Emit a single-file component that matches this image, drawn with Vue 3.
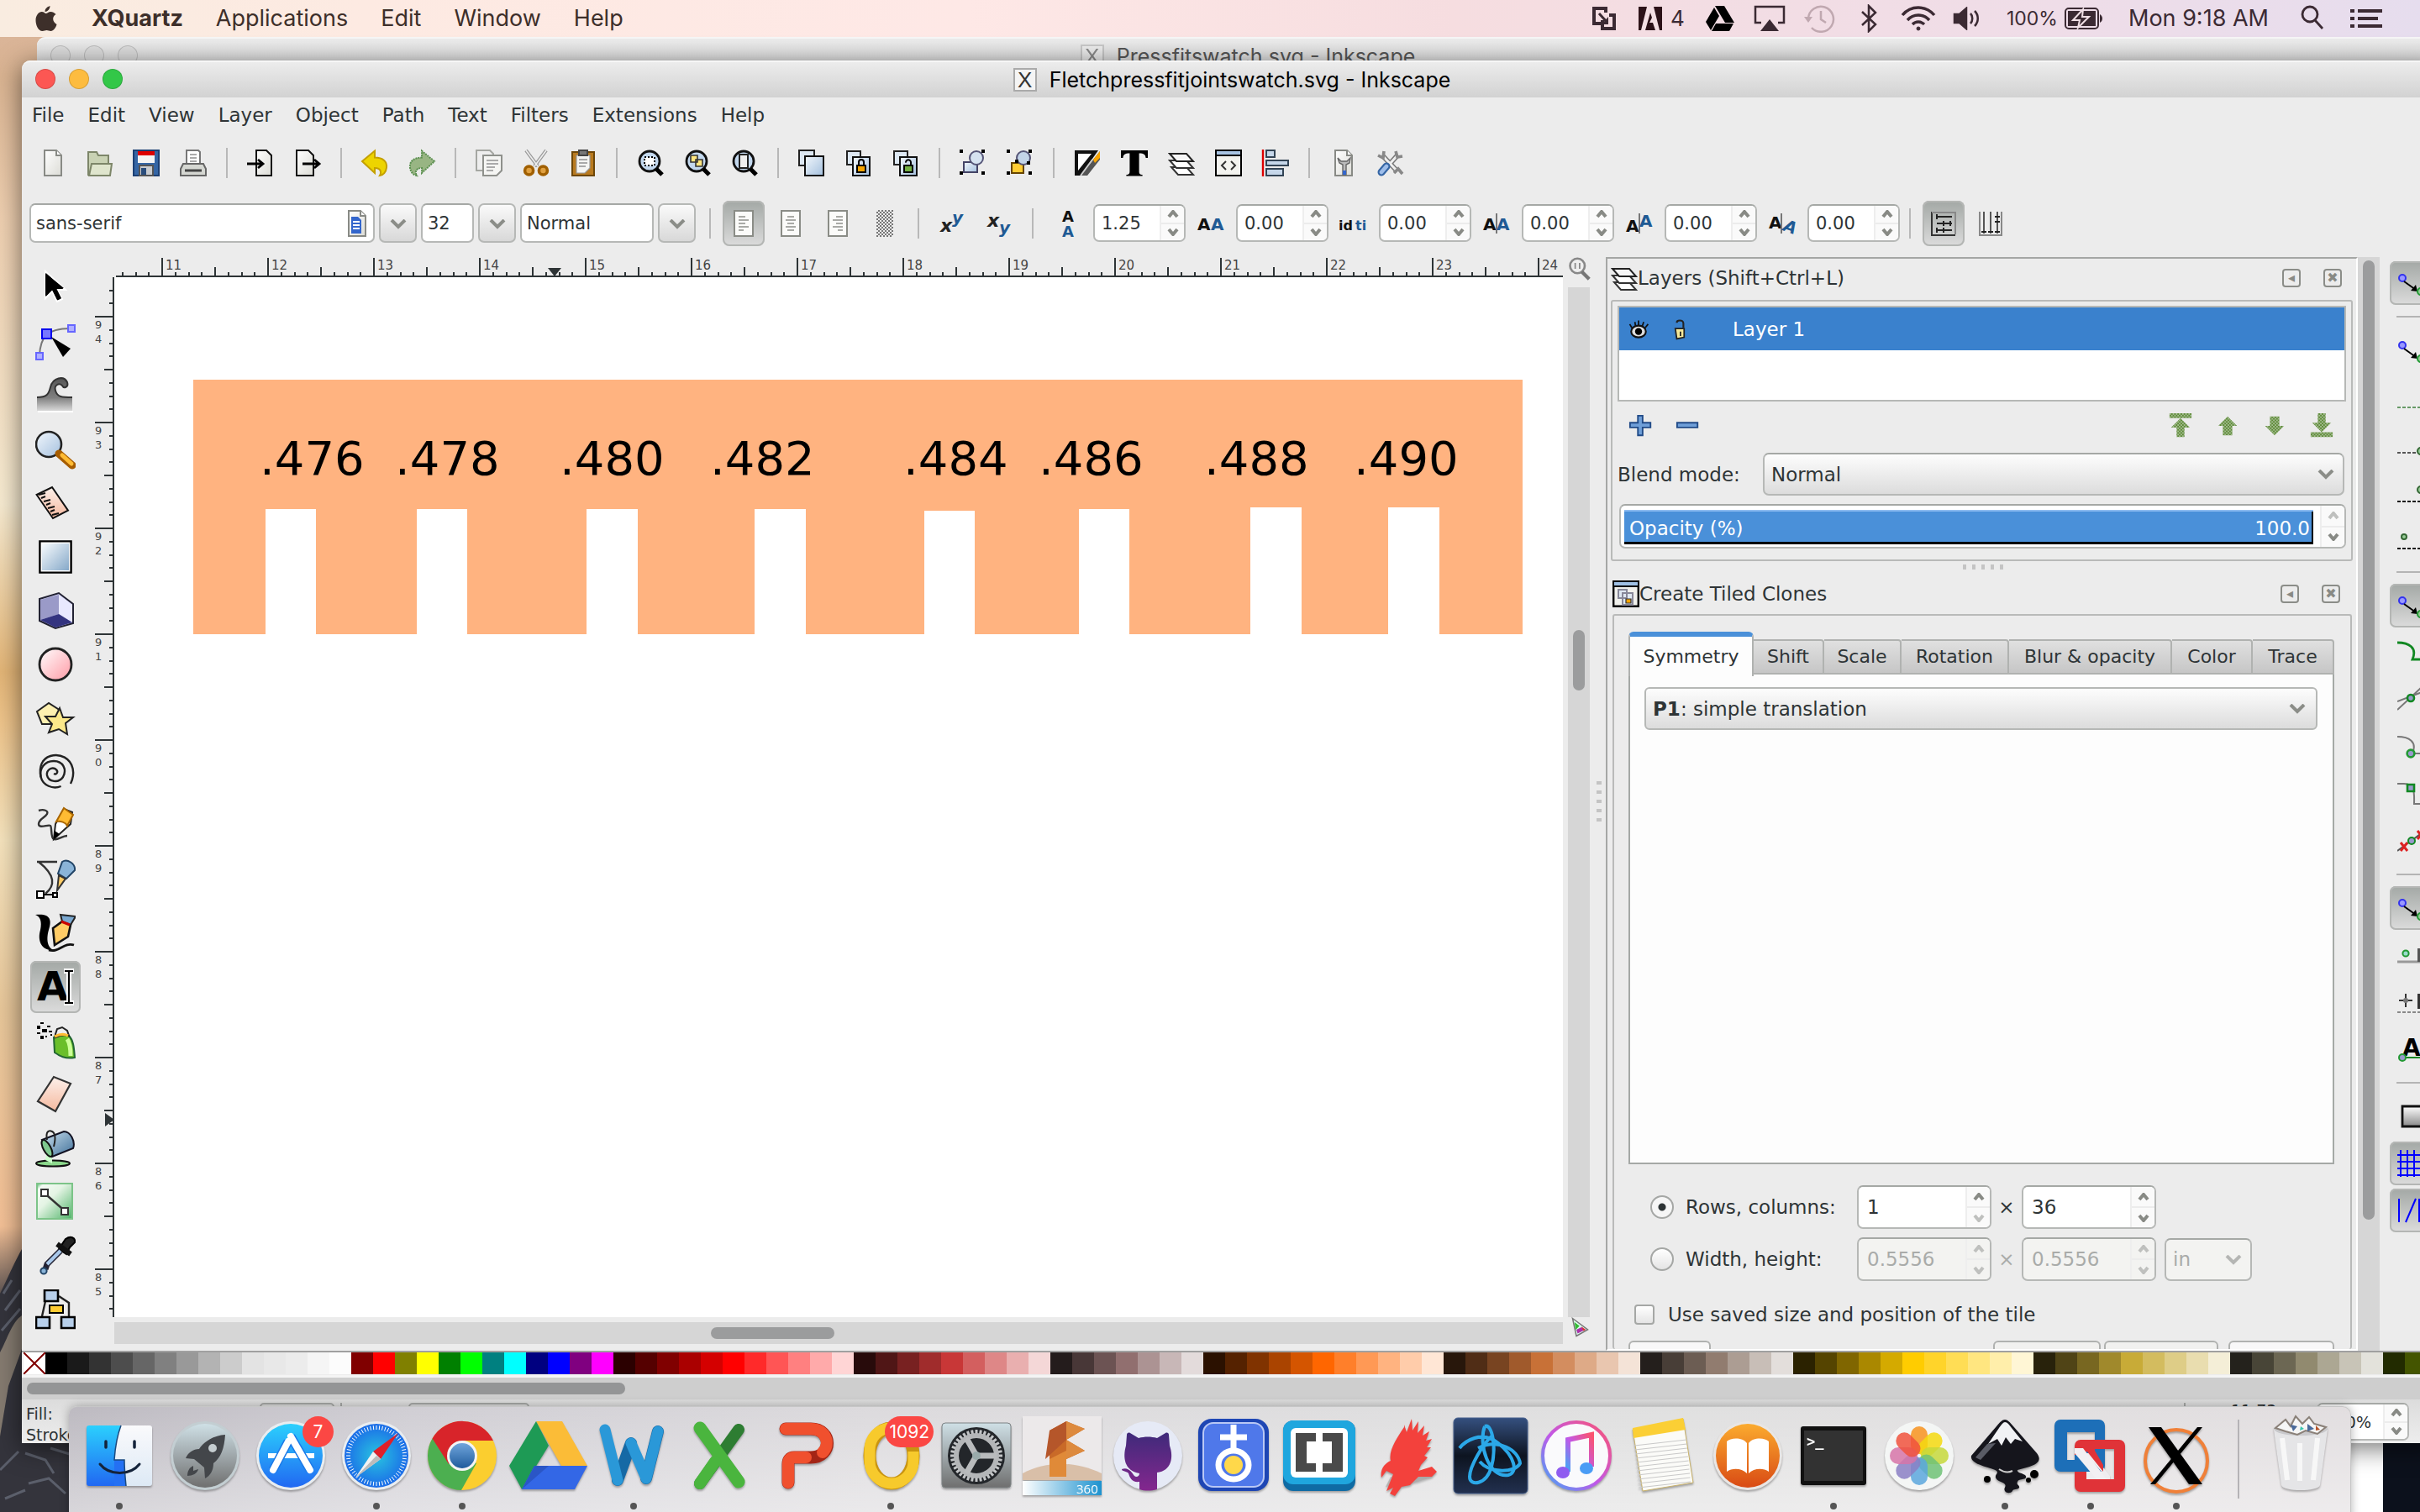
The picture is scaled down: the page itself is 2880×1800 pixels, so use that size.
<script setup>
import { ref } from 'vue'

const macMenus = ['Applications', 'Edit', 'Window', 'Help']
const appMenus = ['File', 'Edit', 'View', 'Layer', 'Object', 'Path', 'Text', 'Filters', 'Extensions', 'Help']

const page = '<path d="M3.5.5h7l3 3v12h-10z" fill="url(#paper)" stroke="#888a85"/><path d="M10.5.5v3h3" fill="#fff" stroke="#888a85"/>'
const lens = '<circle cx="7.5" cy="7" r="6" fill="#c3d8ee" stroke="#111" stroke-width="1.4"/><path d="M11.5 11.5l3.5 3.5" stroke="#000" stroke-width="2.6"/>'
const sheets = '<path d="M1 1h8v8H1z" fill="#dde8f3" stroke="#222"/><path d="M4.500 4.500h10v11h-10z" fill="url(#steel)" stroke="#111"/>'
const corners = '<path d="M0 0h2v2H0zM13 0h2v2h-2zM0 13h2v2H0zM13 13h2v2h-2z" fill="#000"/>'
const para = '<path d="M2.500.5h11v15h-11z" fill="#fbfbf9" stroke="#8a8c86"/>'
const arrow = '<circle cx="3" cy="5" r="2" fill="#99f" stroke="#33e"/><path d="M4 7l7 5" stroke="#000"/><path d="M11 9l1 4-4-.5z"/><circle cx="14" cy="13" r="2" fill="#9c9" stroke="#293"/>'
const T = 'font-family="DejaVu Sans" font-weight="bold"'

const icons = {
  new: page,
  open: '<path d="M1.500 15.500v-14h5l1 2h6v5" fill="#c9d2b4" stroke="#7d8669"/><path d="M2 15.500l1.500-7h12l-1 7z" fill="#dfe5cd" stroke="#7d8669"/>',
  save: '<path d="M.5.5h15v15H.5z" fill="#3465a4" stroke="#1c3f73"/><path d="M3 1h10v7H3z" fill="#f4f4f4"/><path d="M3 1h10v2.500H3z" fill="#d00"/><path d="M4 9.500h8v6H4z" fill="#c9ccd0" stroke="#555"/><path d="M5 11h3v4H5z" fill="#2a4d7c"/>',
  print: '<path d="M4 .5h7l1 1v7H4z" fill="#fff" stroke="#777"/><path d="M6 3h4M6 5h4M6 7h4" stroke="#aaa"/><path d="M2 8.500h12l1.500 3v4H.5v-4z" fill="#d5d7d2" stroke="#666"/><path d="M3 12.500h10" stroke="#444" stroke-width="1.500"/>',
  import: '<path d="M5.500.5h6l3 3v12h-9z" fill="url(#paper)" stroke="#111"/><path d="M0 8.500h9M6.500 6l3 2.500-3 2.500" fill="none" stroke="#000" stroke-width="1.400"/>',
  export: '<path d="M1.500.5h7l3 3v12h-10z" fill="url(#paper)" stroke="#111"/><path d="M5 8.500h10M12 6l3 2.500-3 2.500" fill="none" stroke="#000" stroke-width="1.400"/>',
  undo: '<path d="M.5 7L8 .8v4c5 0 7.500 2.500 7 6-.3 2.500-2 4.500-4 4.700 1-1.500 1-4.500-3-4.500v3z" fill="#edd400" stroke="#c4a000"/>',
  redo: '<path d="M15.500 7L8 .8v4c-5 0-7.500 2.500-7 6 .3 2.500 2 4.500 4 4.700-1-1.500-1-4.500 3-4.500v3z" fill="#98b583" stroke="#5c9050" stroke-dasharray="1 .5"/>',
  copy: '<path d="M.5.5h8l2 2v10H.5z" fill="#eee" stroke="#a5a7a2"/><path d="M4.500 3.500h11v9l-3 3h-8z" fill="#f5f5f3" stroke="#8f918c"/><path d="M6.500 6.500h7M6.500 8.500h7M6.500 10.500h5M6.500 12.500h4" stroke="#aaa"/>',
  cut: '<path d="M2 .5l7 9.500M14 .5L7 10" stroke="#999" stroke-width="2"/><path d="M2 .5l7 9.500M14 .5L7 10" stroke="#eee" stroke-width=".8"/><circle cx="3.800" cy="12.500" r="2.500" fill="#e0a040" stroke="#a05f00" stroke-width="1.800"/><circle cx="12.200" cy="12.500" r="2.500" fill="#e0a040" stroke="#a05f00" stroke-width="1.800"/>',
  paste: '<path d="M1.500 1.500h13v14h-13z" fill="#b97a1f" stroke="#6e4708"/><path d="M4 3.500h8v7.500l-3 3H4z" fill="#f5f5f3" stroke="#999" stroke-width=".6"/><path d="M5.500.5h5v3h-5z" fill="#777" stroke="#444"/><path d="M5.500 6h5M5.500 8h5M5.500 10h4" stroke="#aaa"/>',
  zoomSel: lens + '<path d="M4.500 4.500h6v5h-6z" fill="#fff" stroke="#000" stroke-dasharray="1 1"/>',
  zoomDraw: lens + '<path d="M4 3.500h4v4H4zM7 6h4v4H7z" fill="#ffe680" stroke="#333" stroke-width=".8"/>',
  zoomPage: lens + '<path d="M5 3h5v8H5z" fill="#eee" stroke="#222"/>',
  dup: '<path d="M.5.5h9v9h-9z" fill="#dde8f3" stroke="#222"/><path d="M4 4h11v11.500H4z" fill="url(#steel)" stroke="#111"/>',
  clone: sheets + '<path d="M7 9.500h5v4H7z" fill="#f5a300" stroke="#000"/><path d="M8 9V7.500a1.500 1.500 0 013 0V9" fill="none" stroke="#000"/>',
  unlink: sheets + '<path d="M7 9.500h5v4H7z" fill="#73b043" stroke="#000"/><path d="M8 7.800a1.500 1.500 0 013-.3V9" fill="none" stroke="#000"/>',
  group: corners + '<path d="M2.500 7.500h8v6h-8z" fill="url(#steel)" stroke="#446"/><circle cx="10" cy="5" r="4" fill="#d5e2f0" stroke="#557"/>',
  ungroup: corners + '<path d="M3 8h7v6H3z" fill="#fc3" stroke="#640"/><circle cx="10" cy="5" r="4" fill="#c3d4e8" stroke="#557"/><path d="M5 6h2v2H5zM12 7h2v2h-2z"/>',
  fill: '<path d="M.5.5h14L4 15.500H.5z" fill="#111"/><path d="M2.500 2.500h8l-8 10z" fill="#fff"/><path d="M15.500 1v5L8 15.500H4z" fill="#555"/><path d="M15.500 1v4l-3 3-1-2z" fill="#f9a500"/><path d="M11 6L4 15.500" stroke="#ccc"/>',
  text: '<path d="M0 .5h16v4.500h-1.200c-.3-2-1-2.700-4-2.700V13c0 1.500.5 1.900 2 2v.7H3.200V15c1.500-.1 2-.5 2-2V2.300c-3 0-3.700.7-4 2.700H0z"/>',
  layers: '<path d="M2 10.500h9l4 4.500H6z" fill="#fff" stroke="#333"/><path d="M1 6.500h10l4 4.500H5z" fill="#fff" stroke="#333"/><path d="M1 2.500h10l4 4.500H5z" fill="#f6f6f6" stroke="#222"/>',
  xml: '<path d="M.5.5h15v15H.5z" fill="#f3f3ef" stroke="#000"/><path d="M1 1h14v2.500H1z" fill="#a9c5e4"/><path d="M.5 3.500h15" stroke="#000"/><path d="M6.500 7L4 9.500 6.500 12M9.500 7L12 9.500 9.500 12" fill="none" stroke="#333"/>',
  align: '<path d="M.5 0v16" stroke="#d00" stroke-width="1.200"/><path d="M2.500.5h5v4h-5zM2.500 6.500h13v3h-13zM2.500 11.500h10v4h-10z" fill="#c6d7ea" stroke="#345"/>',
  prefs: page + '<path d="M5 5l1 3 2 1v6h2V9l2-1 .5-3-2 2H7z" fill="#bbb" stroke="#666" stroke-width=".7"/><path d="M8 12.500h2V15H8z" fill="#36c"/>',
  docprefs: '<path d="M4 4l8.500 9M12.500 3.500L4 13" stroke="#777" stroke-width="3"/><path d="M4 4l8.500 9M12.500 3.500L4 13" stroke="#eee" stroke-width="1.500"/><path d="M1 3.500l3 1.500L4.500 1M11.500 1l1 3.500 3-.5M10.500 14l2.500-2.500 2.500 3" fill="none" stroke="#888" stroke-width="1.800"/><path d="M6 10L3 13.500" stroke="#3465a4" stroke-width="4.500" stroke-linecap="round"/><path d="M6 10L3 13.500" stroke="#9dbdea" stroke-width="2.400" stroke-linecap="round"/>',
  fontdoc: page + '<path d="M5 4h4l2 2v8H5z" fill="#36c"/><path d="M6 7h4M6 9h4M6 11h4" stroke="#fff"/>',
  left: para + '<path d="M5 4h4M5 6h6M5 8h4M5 10h6M5 12h3" stroke="#a9aaa6"/>',
  center: para + '<path d="M6 4h4M5 6h6M6 8h4M5 10h6M6 12h4" stroke="#a9aaa6"/>',
  right: para + '<path d="M7 4h4M5 6h6M7 8h4M5 10h6M8 12h3" stroke="#a9aaa6"/>',
  justify: '<path d="M3 0h10v16H3z" fill="url(#dither)"/>',
  sup: `<text x="1" y="13" font-size="11" ${T} font-style="italic" fill="#222">x</text><text x="8" y="8" font-size="10" ${T} font-style="italic" fill="#1f5a94">y</text>`,
  sub: `<text x="1" y="10" font-size="11" ${T} font-style="italic" fill="#222">x</text><text x="8" y="14" font-size="10" ${T} font-style="italic" fill="#1f5a94">y</text>`,
  line: `<text x="4.500" y="7" font-size="9" ${T} fill="#111">A</text><text x="4.500" y="16" font-size="9" ${T} fill="#1f5a94">A</text>`,
  letter: `<text x="0" y="12" font-size="10" ${T} fill="#111">A</text><text x="8" y="12" font-size="10" ${T} fill="#1f5a94">A</text>`,
  word: `<text x="-1" y="12" font-size="8" ${T} fill="#111">id</text><text x="9" y="12" font-size="8" ${T} fill="#1f5a94">ti</text>`,
  kern: `<text x="0" y="12" font-size="10" ${T} fill="#111">A</text><path d="M8 2v12" stroke="#777"/><text x="8" y="12" font-size="10" ${T} fill="#1f5a94">A</text>`,
  shift: `<text x="0" y="13" font-size="10" ${T} fill="#111">A</text><path d="M8 2v12" stroke="#777"/><text x="8" y="10" font-size="10" ${T} fill="#1f5a94">A</text>`,
  rotate: `<text x="0" y="11" font-size="10" ${T} fill="#111">A</text><path d="M7.500 2v12" stroke="#777"/><text x="8" y="12" font-size="10" ${T} font-style="italic" fill="#1f5a94" rotate="20">A</text>`,
  horiz: '<path d="M1 1v14h14" fill="none" stroke="#333"/><path d="M1 1.500h14v13" fill="none" stroke="#888"/><path d="M4 4h9M4 8h9M4 12h9" stroke="#222"/><path d="M4 2.500v3M8 6.500v3M8 10.500v3M4 10.500v3M12 6.500v3" stroke="#222"/>',
  vert: '<path d="M1.500 1v14h13V1" fill="none" stroke="#888"/><path d="M4 1v13M8 1v13M12 1v13" stroke="#555"/><path d="M2.500 13h3M6.500 13h3M10.500 13h3M10.500 4h3M10.500 7h3" stroke="#222"/>',
  magnify: '<circle cx="7" cy="6" r="5" fill="#eee" stroke="#888" stroke-width="1.500"/><path d="M10 10l5 5" stroke="#777" stroke-width="2.400"/><path d="M5.500 4v4M8.500 4v4" stroke="#888"/>',
  cms: '<path d="M3 1l12 9-9 5z" fill="#dfe" stroke="#777"/><path d="M4.500 4l4 3-3 3z" fill="#3b3"/><path d="M6 10l4-2 3 2-6 3z" fill="#a3a"/><path d="M10 7.500l3.500 2.500-2 1z" fill="#d33"/>',
  clones: '<path d="M.5.5h15v15H.5z" fill="#f1f1ec" stroke="#000" stroke-width="1.400"/><path d="M1 1h14v2H1z" fill="#9fc0e4"/><path d="M1 3.500h14" stroke="#000"/><path d="M3.500 5.500h5v5h-5zM6 7.500h6v7H6z" fill="#dfe8f2" stroke="#889"/><path d="M8 11h3v2.500H8z" fill="#f5a300" stroke="#333" stroke-width=".6"/>',
  eye: '<ellipse cx="8" cy="9.500" rx="5" ry="4" fill="#ddd" stroke="#111" stroke-width="1.200"/><circle cx="8" cy="9.500" r="2.400"/><path d="M3.500 7L2 4.500M6 6l-.5-3M8 5.500V2M10.500 6l1-3M12.500 7l2-2.500" stroke="#111"/>',
  lock: '<path d="M5 7.500h6v6l-5 1z" fill="#f5e89a" stroke="#222"/><path d="M10.500 7V4c0-1.500-1-2-2.500-2s-2 .5-2 1.500" fill="none" stroke="#222" stroke-width="1.200"/><path d="M8.500 9.500v3" stroke="#222"/>',
  plus: '<path d="M6 1.500h3V6h5v3H9v5H6V9H1V6h5z" fill="#6f9fd8" stroke="#204a87"/>',
  minus: '<path d="M1 6h13v3H1z" fill="#6f9fd8" stroke="#204a87"/>',
  top: '<path d="M1 0h14v3H1zM8 3l6 6h-3.500v6h-5V9H2z" fill="url(#gdither)"/>',
  up: '<path d="M8 2l6 6h-3v6H5V8H2z" fill="url(#gdither)"/>',
  down: '<path d="M8 14l6-6h-3V2H5v6H2z" fill="url(#gdither)"/>',
  bottom: '<path d="M1 12h14v3H1zM8 12l6-6h-3.500V0h-5v6H2z" fill="url(#gdither)"/>',
  snap: arrow,
  bbox: '<path d="M0 14h16M14 2v12" stroke="#696" stroke-dasharray="2 1"/>',
  bboxEdge: '<path d="M0 13h14V1" fill="none" stroke="#555" stroke-dasharray="2 1"/><circle cx="14" cy="12" r="2" fill="#9c9" stroke="#363"/>',
  bboxMid: '<path d="M0 14h14V1" fill="none" stroke="#111" stroke-dasharray="2 1"/><circle cx="14" cy="7" r="2" fill="#9c9" stroke="#363"/>',
  bboxCenter: '<path d="M0 14h14V3" fill="none" stroke="#111" stroke-dasharray="2 1"/><circle cx="4" cy="7" r="1.500" fill="#9c9" stroke="#363"/>',
  curve: '<path d="M0 2c7 0 12 3 9 10h7" fill="none" stroke="#182" stroke-width="1.400"/>',
  cross: '<path d="M0 9l16-6M0 14L14 1" stroke="#777"/><circle cx="8" cy="7" r="2" fill="#99c" stroke="#182" stroke-width="1.300"/>',
  cusp: '<path d="M0 2c7 0 12 3 9 10h7" fill="none" stroke="#777"/><circle cx="8" cy="12" r="2.200" fill="#99c" stroke="#293" stroke-width="1.300"/>',
  smooth: '<path d="M0 2h4c7 0 6 7 6 12h6" fill="none" stroke="#777"/><path d="M6 2.500h4v4H6z" fill="#99c" stroke="#182" stroke-width="1.300"/>',
  mid: '<path d="M0 14L15 3" stroke="#555"/><path d="M2 9l4 5M6 9l-4 5M12 2l4 5M16 2l-4 5" stroke="#d22" stroke-width="1.500"/><circle cx="8.500" cy="8" r="2" fill="#99c" stroke="#182"/>',
  objc: '<path d="M0 12h16" stroke="#999" stroke-width="1.500"/><path d="M12 4h4v8h-4z" fill="#555"/><circle cx="5" cy="7" r="1.800" fill="#9dc" stroke="#293"/>',
  rotc: '<path d="M0 14h16" stroke="#888" stroke-dasharray="2 1"/><path d="M1 7h8M5 3v8" stroke="#333"/><path d="M12 3h4v9h-4z" fill="#333"/><circle cx="5" cy="7" r="1.500" fill="#777"/>',
  base: `<text x="3" y="12" font-size="14" ${T}>A</text><path d="M2 13h14" stroke="#182"/><circle cx="3" cy="13" r="2" fill="#99c" stroke="#293"/>`,
  pageb: '<path d="M3 2h12v12H3z" fill="url(#shade)" stroke="#111" stroke-width="1.400"/>',
  grid: '<path d="M0 3h16M0 7h16M0 11h16M0 15h16M2 0v16M6 0v16M10 0v16M14 0v16" stroke="#00f"/>',
  guide: '<path d="M1 1v14M5 15L11 1M13 1v14" stroke="#00f" fill="none"/>',
}

const bar = ['new', 'open', 'save', 'print', '|', 'import', 'export', '|', 'undo', 'redo', '|', 'copy', 'cut', 'paste', '|',
  'zoomSel', 'zoomDraw', 'zoomPage', '|', 'dup', 'clone', 'unlink', '|', 'group', 'ungroup', '|', 'fill', 'text', 'layers', 'xml', 'align', '|', 'prefs', 'docprefs']
const aligns = ['left', 'center', 'right', 'justify']
const spacing = [['line', '1.25'], ['letter', '0.00'], ['word', '0.00'], ['kern', '0.00'], ['shift', '0.00'], ['rotate', '0.00']]
const snaps = ['*snap', '|', 'snap', 'bbox', 'bboxEdge', 'bboxMid', 'bboxCenter', '|', '*snap', 'curve', 'cross', 'cusp', 'smooth', 'mid', '|',
  '*snap', 'objc', 'rotc', 'base', '|', 'pageb', '*grid', '*guide']

const tools = [
  ['Select', '<path d="M6 2v16l4-4 3 6 3-1.500-3-5.500h5z" stroke="#fff" stroke-width="1"/><path d="M6 3v14l4-4 3 6 2.500-1-3-6H17z"/>'],
  ['Edit nodes', '<path d="M2.500 20C3 10 6 4 21 4" fill="none" stroke="#777"/><path d="M.5 18.500h4v4h-4zM19.500 2h4v4h-4z" fill="#b0b0ff" stroke="#66f"/><path d="M4 4.500h5.500V10H4z" fill="#77f" stroke="#00e"/><path d="M9.500 9L21 16l-4.500 5z"/>'],
  ['Tweak', '<path d="M1 13c6 0 7-2 8-6 1.500-6 8-7 10-3 1 3-2 4-3 2-2-2-5 0-4 3 1 4 4 4 10 4v8H1z" fill="url(#wave)"/><path d="M1 13c6 0 7-2 8-6 1.500-6 8-7 10-3 1 3-2 4-3 2-2-2-5 0-4 3 1 4 4 4 10 4" fill="none" stroke="#333"/><path d="M1.500 21.500h21" stroke="#fff"/>'],
  ['Zoom', '<circle cx="8" cy="9" r="7.500" fill="url(#steel)" stroke="#222" stroke-width="1.300"/><path d="M14 14.500l8 7" stroke="#a65c00" stroke-width="4.500" stroke-linecap="round"/><path d="M16 15.500l5.500 5" stroke="#fb3" stroke-width="2.500" stroke-linecap="round"/>'],
  ['Measure', '<path d="M.8 7L10 2.500l9.500 13.800L10.500 21z" fill="url(#skin)" stroke="#111"/><path d="M2 7l4-1M3.500 9l2.500-1M5 11l4-1M6.500 13l2.500-1M7.500 15l4-1M9 17l2.500-1M10 19l4-1" stroke="#111"/>'],
  ['Rectangle', '<path d="M2.700 2.700h18.600v18.600H2.700z" fill="#fff" stroke="#000" stroke-width="1.200"/><path d="M4 4h16v16H4z" fill="url(#steel2)"/>'],
  ['3D box', '<path d="M2.500 5L14 1.500 22.500 8v11.500L12 22.500 2.500 18z" fill="#cfcff0" stroke="#223"/><path d="M3 5.500l11-3V14L3 17.500z" fill="#9a9ac8"/><path d="M14 2.500l8 6v10.500l-8-5z" fill="#e8e8ff"/><path d="M3 17.500L14 14l8 5-10 3z" fill="#33337f"/>'],
  ['Ellipse', '<circle cx="12" cy="12" r="9.500" fill="url(#pink)" stroke="#222" stroke-width="1.400"/>'],
  ['Star', '<path d="M1 8l7-5 7 4.500-2 8H4z" fill="#fdf0b0" stroke="#222"/><path d="M14.500 6l2 5.500h6L18 15l1 6.500-5-3-6 2 2-5-4-4.500h6z" fill="#fbe88a" stroke="#222"/>'],
  ['Spiral', '<path d="M11 13c2 1 3-1.500 1-2.800C9.500 8.800 6.500 11 7 14c.8 4 7 4.800 9.500 1C19 10.500 16.500 5.500 11 5.500c-5.500 0-8.800 4.500-7.700 9.500 1.200 5 7 7.500 12 5.500" fill="none" stroke="#222" stroke-width="1.200"/><path d="M3.300 15C2 9 4 4 9 2.500c6-1.800 12 1.500 13.300 7.500.6 3 .2 6-1.300 9" fill="none" stroke="#222" stroke-width="1.200"/>'],
  ['Pencil', '<path d="M2 3c3-1 6 0 5 2s-5 3-5 6 6 0 7 1 0 7 2 8 5-2 8-2" fill="none" stroke="#333" stroke-width="1.200"/><path d="M11 20l1-9 5-9 5 2-1 7z" fill="#fff" stroke="#222"/><path d="M12.500 9.500L17 1.500l5.500 4L19 12c-1-2-4-3-6.500-2.500z" fill="#fb3" stroke="#a60"/><path d="M11 20l.5-5 3 2z"/>'],
  ['Bezier', '<path d="M1 1.500h12M2 1.500c10 8 10 14 4 19" fill="none" stroke="#333" stroke-width="1.200"/><path d="M1 19h4v4H1zM10.500 20h2.500v2.500h-2.500zM5 21h5" fill="#fff" stroke="#000"/><path d="M16 1.500c3-2 8 1 7.500 5l-5 5-5-3z" fill="#8ab4d8" stroke="#246"/><path d="M14 9.500l4 2-5 7z" fill="#fc6" stroke="#333"/>'],
  ['Calligraphy', '<path d="M0 1c9-1 10 3 8 9-2 7 0 12 4 12-8 1-11-5-9-12 1-5 0-8-3-9z"/><path d="M8 22c6 2 9-5 15-3" fill="none" stroke="#111" stroke-width="1.400"/><path d="M10.500 9L16 5l5 2-1.500 7-8 5z" fill="#fc6" stroke="#111" stroke-width="1.300"/><path d="M15 1l9 1-3 5-5-2z" fill="#7aa8d0" stroke="#222"/><path d="M15.500 5l5 2" stroke="#c00" stroke-width="1.500"/>'],
  ['Text', `<text x="1" y="20" font-size="24" ${T}>A</text><path d="M17 2.500h6M17 21.500h6M20 3v18" stroke="#fff" stroke-width="3"/><path d="M17.500 2.500h5M17.500 21.500h5M20 3v18" stroke="#000" stroke-width="1.100"/>`],
  ['Spray', '<path d="M1 3h2v2H1zM3 1h2v1H3zM4 5h3v2H4zM1 7h2v1H1zM7 3h2v1H7zM3 9h2v2H3zM8 6h2v1H8zM6 9h1v1H6zM9 8h1v1H9z"/><path d="M11 10c2-3 7-3 9-1 3 3 3 8 3.500 13-6 1-9-1-12-3z" fill="#6abf2a" stroke="#263"/><path d="M19 11c2 3 2 7 2 10" fill="none" stroke="#cf9" stroke-width="2.500"/><path d="M12 8l1-3 3-1 3 2 1 3c-3-1-6 0-8 1z" fill="#eee" stroke="#222"/><path d="M11.500 9.500c2-1 5-2 8-.5" fill="none" stroke="#fb3" stroke-width="1.600"/>'],
  ['Eraser', '<path d="M1.500 16L11 1.500l10 4L12 22z" fill="url(#skin)" stroke="#333" stroke-width="1.100"/>'],
  ['Bucket', '<ellipse cx="10.500" cy="21" rx="10" ry="1.800" fill="#8cd98c" stroke="#111"/><path d="M6 19l1-5 3 3v4z" fill="#cfc"/><path d="M4 7l13-5c4 0 7 6 5.500 10L10 17z" fill="url(#steel3)" stroke="#112"/><ellipse cx="7" cy="12" rx="2.200" ry="5.500" transform="rotate(-28 7 12)" fill="#7fc98f" stroke="#111"/><path d="M7 7c-1-5 1-6 3-5s2 5 1 9" fill="none" stroke="#222"/>'],
  ['Gradient', '<path d="M1 1h21v21H1z" fill="url(#mint)" stroke="#7cc488"/><path d="M3.500 4.500h4v4h-4zM15.500 15.500h4v4h-4z" fill="#fff" stroke="#333"/><path d="M7.500 8.500l8 7" stroke="#333" stroke-width="1.200"/>'],
  ['Dropper', '<path d="M14 8l4-6c3-2 6-1 5.500 2l-3 3-2 4z" fill="#222" stroke="#000"/><path d="M13 5l8 6" stroke="#111" stroke-width="3"/><path d="M15 9L7 17l-1 3" fill="none" stroke="#223" stroke-width="3.500"/><path d="M15 9L7 17" stroke="#a9c8ea" stroke-width="2"/><circle cx="5" cy="21" r="1.800" fill="#8ab4d8" stroke="#246"/>'],
  ['Connector', '<path d="M6 7L4 16M14 4l6 4v8" fill="none" stroke="#222" stroke-width="1.200"/><path d="M5.500.5h8V7h-8zM.5 16.500h8V23h-8zM15.500 16.500h8V23h-8z" fill="#b7cfea" stroke="#000" stroke-width="1.300"/><path d="M8.500 9.500h8V14h-8z" fill="#fc3" stroke="#000"/>'],
]

const joints = [[316, 376, 606, 309, '.476'], [496, 556, 606, 470, '.478'], [698, 759, 606, 666, '.480'], [898, 959, 606, 845, '.482'],
  [1100, 1160, 608, 1075, '.484'], [1284, 1344, 606, 1236, '.486'], [1488, 1549, 604, 1433, '.488'], [1652, 1713, 604, 1611, '.490']]
  .map(([a, b, y, tx, t]) => ({ x: a - 136, w: b - a, y: y - 330, tx: tx - 136, t }))

const hTicks = []
for (let i = -3; i < 105; i++) hTicks.push({ p: Math.round(57 + i * 15.75), k: i % 8 === 0 ? 2 : i % 4 === 0 ? 1 : 0, n: 11 + i / 8 })
const vTicks = []
for (let i = -2; i < 76; i++) vTicks.push({ p: Math.round(47 + i * 15.75), k: i % 8 === 0 ? 2 : i % 4 === 0 ? 1 : 0, n: String(94 - i / 8) })
const len = [6, 12, 23]

const tabs = ['Shift', 'Scale', 'Rotation', 'Blur & opacity', 'Color', 'Trace']
const tabW = [84, 92, 128, 194, 96, 97]

const swatches = ('000000 1a1a1a 333333 4d4d4d 666666 808080 999999 b3b3b3 cccccc e3e3e3 e8e8e8 ececec f5f5f5 fcfcfc ' +
  '800000 ff0000 808000 ffff00 008000 00ff00 008080 00ffff 000080 0000ff 800080 ff00ff ' +
  '2b0000 550000 800000 aa0000 d40000 ff0000 ff2a2a ff5555 ff8080 ffaaaa ffd5d5 280b0b 501616 782121 a02c2c c83737 d35f5f de8787 e9afaf f4d7d7 ' +
  '241c1c 483737 6c5353 916f6f ac9393 c8b7b7 e3dbdb 2b1100 552200 803300 aa4400 d45500 ff6600 ff7f2a ff9955 ffb380 ffccaa ffe6d5 ' +
  '28170b 502d16 784421 a05a2c c87137 d38d5f deaa87 e9c6af f4e3d7 241f1c 483e37 6c5d53 917c6f ac9d93 c8beb7 e3dedb ' +
  '2b2200 554400 806600 aa8800 d4aa00 ffcc00 ffd42a ffdd55 ffe680 ffeeaa fff6d5 28220b 504416 786721 a0892c c8ab37 d3bc5f decd87 e9ddaf f4eed7 ' +
  '24221c 484537 6c6753 918a6f aca793 c8c4b7 e3e2db 222b00 445500 668000').split(' ')

const rays = (n, r1, r2, c, w) => Array.from({ length: n }, (_, i) => {
  const a = (i * 2 * Math.PI) / n
  return `<path d="M${45 + r1 * Math.cos(a)} ${45 + r1 * Math.sin(a)}L${45 + r2 * Math.cos(a)} ${45 + r2 * Math.sin(a)}" stroke="${c}" stroke-width="${w}"/>`
}).join('')
const petals = ['#f7931e', '#f4d90f', '#c5d83b', '#6fc276', '#5ba7dd', '#8a7fc4', '#d674a8', '#f0523d']
  .map((c, i) => `<rect x="35" y="10" width="20" height="33" rx="10" fill="${c}" opacity=".85" transform="rotate(${i * 45} 45 45)"/>`).join('')
const ruled = [0, 1, 2, 3, 4, 5, 6, 7, 8, 9, 10].map(i => `<path d="M${12 + i * .5} ${33 + i * 5}l62-7" stroke="#c9c9c9"/>`).join('')

const apps = [
  { name: 'Finder', on: 1, art: '<path d="M9 9h38v72H9a3 3 0 01-3-3V12a3 3 0 013-3z" fill="url(#sky)"/><path d="M47 9C42 22 40 36 39 50h12c0 10 1 21 2 31h28a3 3 0 003-3V12a3 3 0 00-3-3z" fill="url(#ice)"/><path d="M39 50h12c0 10 1 21 2 31H39z" fill="#2470f3"/><path d="M47 9C42 22 40 36 39 50h12c0 10 1 21 2 31" fill="none" stroke="#1a4a80" stroke-width="1.500"/><path d="M29 28v7M63 28v7" stroke="#14233a" stroke-width="3.500" stroke-linecap="round"/><path d="M22 55c11 14 36 14 47 0" fill="none" stroke="#14233a" stroke-width="3" stroke-linecap="round"/>' },
  { name: 'Launchpad', art: '<circle cx="45" cy="45" r="41" fill="#c3ced2"/><circle cx="45" cy="45" r="38" fill="url(#slate)"/><path d="M69 20c-14 1-25 8-31 17-7 0-13 4-16 11l10 1 12 10 1 13c6-3 10-9 10-18 9-7 13-18 14-34z" fill="#43464a"/><circle cx="54" cy="36" r="5" fill="#c5cdd0"/><path d="M31 57c-5 2-7 7-7 12 6 0 12-3 13-8l-6 2z" fill="#43464a"/>' },
  { name: 'App Store', badge: '7', art: '<circle cx="45" cy="45" r="41" fill="#e9edf0"/><circle cx="45" cy="45" r="38" fill="url(#sky)"/><path d="M18 45h55" stroke="#fff" stroke-width="6"/><path d="M42 28L24 62M45 22l23 40" stroke="#1c7ae8" stroke-width="11"/><path d="M42 28L24 62M45 22l23 40" stroke="#fff" stroke-width="8" stroke-linecap="round"/>' },
  { name: 'Safari', on: 1, art: '<circle cx="45" cy="45" r="41" fill="#e9edf0"/><circle cx="45" cy="45" r="38" fill="url(#ocean)"/>' + rays(60, 31, 36, '#fff', 1) + '<path d="M71 18L50 49l-9-9z" fill="#e0202a"/><path d="M20 71l21-31 9 9z" fill="#f2f2f2"/><path d="M20 71l25-26 5 4z" fill="#bbb"/>' },
  { name: 'Chrome', on: 1, art: '<circle cx="45" cy="45" r="41" fill="#fbce2f"/><path d="M9.500 24.500A41 41 0 0044 86l18-32-17-9z" fill="#4caf50"/><path d="M9.500 24.500L29 55l16-28h37A41 41 0 009.500 24.500z" fill="#d8242a"/><circle cx="45" cy="45" r="18" fill="#f4f4f4"/><circle cx="45" cy="45" r="15" fill="url(#chrome)"/>' },
  { name: 'Google Drive', art: '<path d="M31 4h31l30 53H61z" fill="#fbbc37"/><path d="M31 4L-1 57l15 28 32-52z" fill="#1e9a55"/><path d="M29 57h63L77 85H14z" fill="#3367e6"/><path d="M14 85l15-28h17z" fill="#2a56c6"/>' },
  { name: 'Word', on: 1, art: '<path d="M26 74l16-44M60 72l14-56" fill="none" stroke="#1569a5" stroke-width="14" stroke-linecap="round"/><path d="M11 14l15 60M42 30l18 42 14-56" fill="none" stroke="#2a98d8" stroke-width="13" stroke-linecap="round" stroke-linejoin="round"/>' },
  { name: 'Excel', art: '<path d="M68 14L22 78" stroke="#2d7d32" stroke-width="14" stroke-linecap="round"/><path d="M22 12l46 64" stroke="#4ab53e" stroke-width="15" stroke-linecap="round"/><path d="M22 78l18-26" stroke="#4ab53e" stroke-width="14" stroke-linecap="round"/>' },
  { name: 'PowerPoint', art: '<path d="M22 13h30c26 0 26 34 0 34H32c-5 0-7 3-7 8v22" fill="none" stroke="#a32516" stroke-width="15" stroke-linecap="round"/><path d="M22 13h30c18 0 24 18 14 28M46 47H32c-5 0-7 3-7 8v22" fill="none" stroke="#f0502e" stroke-width="14" stroke-linecap="round"/>' },
  { name: 'Outlook', on: 1, badge: '1092', art: '<ellipse cx="46" cy="45" rx="26" ry="33" fill="none" stroke="#c99410" stroke-width="15"/><path d="M72 40v12c0 14-12 26-26 26S20 66 20 52V38c0-14 10-26 26-26" fill="none" stroke="#f7ca2c" stroke-width="13"/>' },
  { name: 'System Preferences', art: '<rect x="4" y="6" width="82" height="77" rx="4" fill="url(#slate)" stroke="#7d8284"/><circle cx="45" cy="45" r="34" fill="#23262a"/>' + rays(36, 25, 31, '#c3c5c7', 3) + '<circle cx="45" cy="45" r="24" fill="none" stroke="#b4b6b8" stroke-width="6"/><path d="M45 45h24M45 45L33 24M45 45L33 66" stroke="#b9bbbd" stroke-width="7"/><circle cx="45" cy="45" r="5" fill="#9aa"/>' },
  { name: 'Fusion 360', art: '<path d="M-2-2h94v76H-2z" fill="#ece9ea"/><path d="M-2 66c30-16 64-14 94 0v8H-2z" fill="#d9bfa8"/><path d="M30 15L50 4l22 9-22 13 22 13-22 10v21H30z" fill="#c96a28"/><path d="M50 4l22 9-22 13zM50 26l22 13-22 10z" fill="#dd8a3e"/><path d="M30 15L50 4v22L25 49z" fill="#b5562a"/><path d="M30 49l20-10v31H30z" fill="#e08a38"/><path d="M-2 75h94v17H-2z" fill="url(#fus)"/><text x="62" y="90" font-size="15" font-family="Open Sans" fill="#fff">360</text>' },
  { name: 'GitHub', art: '<circle cx="45" cy="45" r="41" fill="#e6eaf6"/><path d="M20 20c0-2 2-3 4-2l10 6c7-2 15-2 22 0l10-6c2-1 4 0 4 2l1 13c5 14 2 30-15 32v20c-7 2-15 2-21 0V76c-9 1-11-4-13-10-2-3-8-2-8-5 8-3 12 4 15 8 2 2 6 1 6-3-18-3-20-19-16-33z" fill="url(#purp)"/>' },
  { name: 'Chart', art: '<rect x="3" y="1" width="84" height="86" rx="16" fill="#1e46b4"/><rect x="9" y="6" width="72" height="76" rx="12" fill="#4f78ea" stroke="#b9c8f5" stroke-width="2"/><path d="M45 8v30M29 23h32" stroke="#fff" stroke-width="7"/><ellipse cx="45" cy="56" rx="18" ry="17" fill="none" stroke="#fff" stroke-width="7"/><circle cx="45" cy="56" r="11" fill="#ffd84a"/>' },
  { name: 'Brackets', art: '<rect x="2" y="3" width="86" height="84" rx="12" fill="#0f6ba4"/><rect x="2" y="3" width="86" height="76" rx="12" fill="#1fa6de"/><rect x="11" y="12" width="68" height="59" rx="6" fill="#fff"/><path d="M41 18H17v46h24V54H30V28h11zM49 18h24v46H49V54h11V28H49z" fill="#4a4a4a"/>' },
  { name: 'Phoenix', art: '<path d="M22 82l38-6 18-6-20-8-30 8z" fill="#aaa" opacity=".7"/><path d="M44 8l3 9 6-16 1 14 7-11-1 14 8-9-2 12 8-5-4 11 7-2-6 10 5 0-8 10 4 2-8 9-3 7 16-5 6 6-6 6-16 0-10 10-10 2-8 11-6-3 4-7-8 4 4-10 4-10-8-4-6 8c-2-10 4-17 11-20-3-12 8-28 16-40z" fill="#f3413c"/>' },
  { name: 'Battle.net', art: '<rect x="1" y="0" width="88" height="90" rx="5" fill="url(#night)" stroke="#46618e"/><g fill="none" stroke="#2ba8e8" stroke-width="4"><path d="M38 10c-8 20 4 62 28 58 12-3 8-22-12-38S14 28 8 36"/><path d="M38 10c9-4 14 26 8 48S20 82 20 70s16-40 28-50"/><path d="M30 36c24-12 48 2 50 18-6 12-36 12-48-2"/></g>' },
  { name: 'iTunes', art: '<circle cx="45" cy="45" r="40" fill="#fafafc" stroke="url(#tunes)" stroke-width="4"/><path d="M35 64V26l28-6v38" fill="none" stroke="url(#tunes)" stroke-width="6"/><ellipse cx="29" cy="65" rx="8" ry="7" fill="#8f5cf0"/><ellipse cx="57" cy="60" rx="8" ry="7" fill="#4a9cf5"/>' },
  { name: 'Notes', art: '<path d="M10 14l60-13 12 76-60 10z" fill="#fbfbf8" stroke="#c9b26a"/><path d="M10 12l60-12 3 14-62 10z" fill="#fbcf35"/>' + ruled },
  { name: 'iBooks', art: '<circle cx="45" cy="45" r="41" fill="#e9e6e4"/><circle cx="45" cy="45" r="38" fill="url(#orange)"/><path d="M44 30c-5-7-19-7-24-2v36c7-5 18-4 24 2zM46 30c5-7 19-7 24-2v36c-7-5-18-4-24 2z" fill="#fff"/>' },
  { name: 'Terminal', on: 1, art: '<rect x="6" y="10" width="78" height="70" rx="3" fill="#111"/><rect x="10" y="15" width="70" height="60" fill="#323232"/><text x="13" y="34" font-size="17" font-family="DejaVu Sans Mono" font-weight="bold" fill="#fff">&gt;_</text>' },
  { name: 'Photos', art: '<circle cx="45" cy="45" r="41" fill="#f4f6f5"/>' + petals },
  { name: 'Inkscape', on: 1, art: '<path d="M45 2c3 0 6 3 10 8l28 32c6 8 2 13-12 17l-11 3c-2 4 12 4 10 9-1 3-9 1-10 5-2 4 3 4 2 7-2 3-7 1-8 4-2 3-7 3-9 0-2-4 2-5 0-8s-9-3-11-8c-1-4 4-5 1-8C27 58 3 56 5 45l30-35c4-5 7-8 10-8z" fill="#15151c"/><path d="M45 5c3 0 5 3 8 7l13 16-9-3-5 6-6-8-5 10-5-8-11 6 13-19c3-4 5-7 7-7z" fill="#f1f2f5"/><path d="M24 31L10 47l6 3 18-20z" fill="#5a5c66"/><path d="M38 61c6 4 12 4 16 2" fill="none" stroke="#ccc" stroke-width="2"/><circle cx="80" cy="67" r="5"/><circle cx="24" cy="73" r="4"/><circle cx="73" cy="74" r="3"/>' },
  { name: 'VMware', on: 1, art: '<path fill-rule="evenodd" d="M9 2h46a7 7 0 017 7v48a7 7 0 01-7 7H9a7 7 0 01-7-7V9a7 7 0 017-7zM17 17v33h9V35h24V17z" fill="#1d6fb8"/><path fill-rule="evenodd" d="M33 26h46a7 7 0 017 7v48a7 7 0 01-7 7H33a7 7 0 01-7-7V33a7 7 0 017-7zM40 40v33h33V37H50z" fill="#e03338"/><path d="M40 42l6 0 22 27v4H40z" fill="#efedf0"/><path d="M26 44h14l18 20H26z" fill="#1d6fb8"/><path d="M26 36h10l28 37H52L26 42z" fill="#f2f0f3"/><path d="M36 34l14-4v9l10 17v8z" fill="#e03338"/>' },
  { name: 'X11', on: 1, art: '<circle cx="45" cy="51" r="37" fill="none" stroke="#f08038" stroke-width="4"/><path d="M12 11h15l49 68H60z"/><path d="M76 11h-6L14 79h6z"/>' },
]

const shownMenu = ref('XQuartz')
const layout = ref('rows')
</script>

<template>
  <div class="desktop">
    <svg class="defs" width="0" height="0" aria-hidden="true">
      <defs>
        <linearGradient id="paper" x2="1" y2="1"><stop stop-color="#fff" /><stop offset="1" stop-color="#dcdcd6" /></linearGradient>
        <linearGradient id="shade" y2="1" x2="0"><stop stop-color="#fff" /><stop offset="1" stop-color="#888" /></linearGradient>
        <linearGradient id="wave" y2="1" x2="0"><stop stop-color="#555" /><stop offset=".6" stop-color="#808080" /><stop offset="1" stop-color="#d8d8d8" /></linearGradient>
        <linearGradient id="steel" x2="1" y2="1"><stop stop-color="#f2f7fc" /><stop offset="1" stop-color="#a4c0de" /></linearGradient>
        <linearGradient id="steel2" x2="1" y2="1"><stop stop-color="#f8fbfd" /><stop offset="1" stop-color="#86a9c9" /></linearGradient>
        <linearGradient id="steel3" x2="1" y2="1"><stop stop-color="#cfe4f2" /><stop offset="1" stop-color="#3f6f98" /></linearGradient>
        <linearGradient id="skin" x2="0" y2="1"><stop stop-color="#fdf0ea" /><stop offset="1" stop-color="#f5b99f" /></linearGradient>
        <linearGradient id="pink" x2="1" y2="1"><stop stop-color="#fff" /><stop offset="1" stop-color="#ff9aa5" /></linearGradient>
        <linearGradient id="mint" x1="0" y1="0" x2="1" y2="1"><stop stop-color="#4fb368" /><stop offset=".1" stop-color="#f4fbf4" /><stop offset=".4" stop-color="#e4f4e4" /><stop offset="1" stop-color="#4fb368" /></linearGradient>
        <linearGradient id="sky" x2="0" y2="1"><stop stop-color="#2bd0fd" /><stop offset="1" stop-color="#2168f2" /></linearGradient>
        <linearGradient id="ice" x2="0" y2="1"><stop stop-color="#fafafc" /><stop offset="1" stop-color="#dde9f5" /></linearGradient>
        <linearGradient id="slate" x2="0" y2="1"><stop stop-color="#cfe0e6" /><stop offset="1" stop-color="#6f6f6f" /></linearGradient>
        <radialGradient id="ocean"><stop stop-color="#28c4e0" /><stop offset="1" stop-color="#1b6ce8" /></radialGradient>
        <linearGradient id="chrome" x2="0" y2="1"><stop stop-color="#70a5dc" /><stop offset="1" stop-color="#1f5b9c" /></linearGradient>
        <linearGradient id="fus"><stop stop-color="#fff" /><stop offset="1" stop-color="#1d92cf" /></linearGradient>
        <linearGradient id="purp" x2="0" y2="1"><stop stop-color="#3f2a7a" /><stop offset="1" stop-color="#84278e" /></linearGradient>
        <linearGradient id="night" x2="0" y2="1"><stop stop-color="#35507f" /><stop offset=".5" stop-color="#0d1420" /><stop offset="1" stop-color="#22304f" /></linearGradient>
        <linearGradient id="tunes" x1="1" y1="0" x2="0" y2="1"><stop stop-color="#fb5470" /><stop offset=".55" stop-color="#c158e8" /><stop offset="1" stop-color="#3fa9f5" /></linearGradient>
        <linearGradient id="orange" x2="0" y2="1"><stop stop-color="#fbab2e" /><stop offset="1" stop-color="#d94a14" /></linearGradient>
        <pattern id="dither" width="2" height="2" patternUnits="userSpaceOnUse"><path d="M0 0h1v1H0zM1 1h1v1H1z" fill="#777" /></pattern>
        <pattern id="gdither" width="2" height="2" patternUnits="userSpaceOnUse"><path d="M0 0h2v2H0z" fill="#a3bb90" /><path d="M0 0h1v1H0zM1 1h1v1H1z" fill="#5c8a35" /></pattern>
      </defs>
    </svg>

    <svg class="rocks" viewBox="0 0 150 320" aria-hidden="true">
      <path d="M0 60C10 40 18 20 30 0h120v320H0z" fill="#34343c" />
      <path d="M0 130c8-14 14-36 26-44v40L10 170l-10 60z" fill="#857b70" />
      <path d="M4 60l10-16M6 80l18-24M2 104l22-26M0 270l22-22M30 250l24 8 10 16M60 244l26 8M34 286l24-6 20 18M6 304l24-10" fill="none" stroke="#5b5f6b" stroke-width="3" />
    </svg>
    <div class="rightedge"></div>

    <header class="macbar">
      <svg class="apple" viewBox="0 0 26 32"><path d="M18 1c0 4-3 7-6 7 0-4 3-6 6-7zM13 10c2 0 3-2 6-2 2 0 4 1 6 3-5 3-4 9 1 12-1 4-4 8-7 8-2 0-3-1-5-1s-3 1-5 1C4 31 1 24 1 18S5 8 8 8s4 2 5 2z" fill="#3d2f2a" /></svg>
      <button class="macitem strong">{{ shownMenu }}</button>
      <button v-for="m in macMenus" :key="m" class="macitem">{{ m }}</button>
      <div class="tray">
        <span class="slot"><svg width="32" height="32" viewBox="0 0 32 32" fill="none" stroke="#3b2a33" stroke-width="4"><path d="M14 22H4V4h14v5M22 12h6v16H14V18" /><path d="M10 10l10 11" stroke-width="3" /><path d="M21 14v9h-8z" fill="#3b2a33" stroke="none" /></svg></span>
        <span class="slot wide"><svg width="28" height="28" viewBox="0 0 28 28"><path d="M0 0h28v28H0z" fill="#2c1218" /><path d="M10 0h8l7 28h-5l-3-9h-4l3-6-2-6-6 21H3z" fill="#f4dfe3" /></svg>4</span>
        <span class="slot"><svg width="34" height="30" viewBox="0 0 34 30"><path d="M11 0h11l12 20H23zM10 2l6 10L6 29 0 19zM12 21h21l-5 9H7z" /></svg></span>
        <span class="slot"><svg width="38" height="32" viewBox="0 0 38 32"><path d="M9 21H2V2h34v19h-7" fill="none" stroke="#3b2a33" stroke-width="2.500" /><path d="M19 17l11 14H8z" fill="#3b2a33" /></svg></span>
        <span class="slot"><svg width="38" height="34" viewBox="0 0 38 34" fill="none" stroke="#c0a8b0" stroke-width="2.500"><path d="M6 17A15 15 0 1110 28M21 8v10l6 4" /><path d="M1 15h10l-5 7z" fill="#c0a8b0" stroke="none" /></svg></span>
        <span class="slot"><svg width="20" height="34" viewBox="0 0 20 34" fill="none" stroke="#3b2a33" stroke-width="2.500"><path d="M2 9l16 15-8 8V2l8 8L2 25" /></svg></span>
        <span class="slot"><svg width="42" height="30" viewBox="0 0 42 30" fill="none" stroke="#3b2a33" stroke-width="3.500"><path d="M2 11c10-12 28-12 38 0M8 17c7-8 19-8 26 0M14 22c4-4 10-4 14 0" /><circle cx="21" cy="27" r="2" fill="#3b2a33" stroke-width="1" /></svg></span>
        <span class="slot"><svg width="36" height="28" viewBox="0 0 36 28" fill="none" stroke="#3b2a33" stroke-width="2.500"><path d="M2 9h6l8-7v24l-8-7H2z" fill="#3b2a33" /><path d="M21 8c3 3 3 9 0 12M26 5c5 5 5 13 0 18" /></svg></span>
        <span class="battery">100%<svg width="46" height="26" viewBox="0 0 46 26"><rect x="1" y="1" width="39" height="24" rx="4" fill="none" stroke="#3b2a33" stroke-width="2" /><rect x="4" y="4" width="33" height="18" fill="#3b2a33" /><path d="M42 8c4 2 4 8 0 10z" fill="#3b2a33" /><path d="M22 2L10 15h8l-2 9 13-13h-8z" fill="#3b2a33" stroke="#f0dfe5" stroke-width="2" /></svg></span>
        <span class="clock">Mon 9:18 AM</span>
        <span class="slot end"><svg width="28" height="32" viewBox="0 0 28 32" fill="none" stroke="#3b2a33" stroke-width="2.800"><circle cx="11" cy="11" r="9" /><path d="M17 18l9 10" /></svg></span>
        <span class="slot end"><svg width="38" height="22" viewBox="0 0 38 22"><path d="M0 0h5v4H0zM9 0h29v4H9zM0 9h5v4H0zM9 9h24v4H9zM0 18h5v4H0zM9 18h29v4H9z" fill="#3b2a33" /></svg></span>
      </div>
    </header>

    <div class="window back">
      <div class="titlebar">
        <div class="lights dim"><i></i><i></i><i></i></div>
        <span class="xicon">X</span><span>Pressfitswatch.svg - Inkscape</span>
      </div>
    </div>

    <main class="window front">
      <div class="titlebar">
        <div class="lights"><i class="r"></i><i class="y"></i><i class="g"></i></div>
        <span class="xicon">X</span><span>Fletchpressfitjointswatch.svg - Inkscape</span>
      </div>

      <nav class="menus"><button v-for="m in appMenus" :key="m">{{ m }}</button></nav>

      <div class="commands">
        <template v-for="(b, i) in bar" :key="i">
          <span v-if="b === '|'" class="sep"></span>
          <button v-else class="ic" :aria-label="b"><svg viewBox="0 0 16 16" v-html="icons[b]"></svg></button>
        </template>
      </div>

      <div class="textbar">
        <div class="field family"><input value="sans-serif" aria-label="Font family"><svg viewBox="0 0 16 16" v-html="icons.fontdoc"></svg></div>
        <button class="drop" aria-label="Families"><svg viewBox="0 0 20 12"><path d="M2 1l8 8 8-8" /></svg></button>
        <div class="field size"><input value="32" aria-label="Font size"></div>
        <button class="drop" aria-label="Sizes"><svg viewBox="0 0 20 12"><path d="M2 1l8 8 8-8" /></svg></button>
        <div class="field style"><input value="Normal" aria-label="Font style"></div>
        <button class="drop" aria-label="Styles"><svg viewBox="0 0 20 12"><path d="M2 1l8 8 8-8" /></svg></button>
        <span class="sep"></span>
        <button v-for="(a, i) in aligns" :key="a" class="ic" :class="{ on: i === 0 }" :aria-label="a"><svg viewBox="0 0 16 16" v-html="icons[a]"></svg></button>
        <span class="sep"></span>
        <button class="ic" aria-label="Superscript"><svg viewBox="0 0 16 16" v-html="icons.sup"></svg></button>
        <button class="ic" aria-label="Subscript"><svg viewBox="0 0 16 16" v-html="icons.sub"></svg></button>
        <span class="sep"></span>
        <template v-for="s in spacing" :key="s[0]">
          <svg class="cap" viewBox="0 0 16 16" v-html="icons[s[0]]"></svg>
          <div class="spin"><input :value="s[1]" :aria-label="s[0]"><span class="steps"><button aria-label="Up"><svg viewBox="0 0 14 10"><path d="M2 8l5-6 5 6" /></svg></button><button aria-label="Down"><svg viewBox="0 0 14 10"><path d="M2 2l5 6 5-6" /></svg></button></span></div>
        </template>
        <span class="sep"></span>
        <button class="ic on" aria-label="Horizontal text"><svg viewBox="0 0 16 16" v-html="icons.horiz"></svg></button>
        <button class="ic" aria-label="Vertical text"><svg viewBox="0 0 16 16" v-html="icons.vert"></svg></button>
      </div>

      <div class="body">
        <div class="tools">
          <button v-for="t in tools" :key="t[0]" :class="{ on: t[0] === 'Text' }" :aria-label="t[0]"><svg viewBox="0 0 24 24" v-html="t[1]"></svg></button>
        </div>

        <div class="stage">
          <svg class="hruler">
            <path v-for="t in hTicks" :key="t.p" :d="`M${t.p} 24V${24 - len[t.k]}`" />
            <path d="M2 23H2400" />
            <template v-for="t in hTicks" :key="'n' + t.p"><text v-if="t.k === 2" :x="t.p + 4" y="15">{{ t.n }}</text></template>
            <path d="M516 13h16l-8 10z" class="mark" />
          </svg>
          <button class="corner" aria-label="Zoom with window"><svg viewBox="0 0 16 16" v-html="icons.magnify"></svg></button>
          <svg class="vruler">
            <path v-for="t in vTicks" :key="t.p" :d="`M30 ${t.p}H${30 - len[t.k]}`" />
            <path d="M29 0V1240" />
            <template v-for="t in vTicks" :key="'n' + t.p"><text v-if="t.k === 2" x="7" :y="t.p + 14">{{ t.n[0] }}</text><text v-if="t.k === 2" x="7" :y="t.p + 31">{{ t.n[1] }}</text></template>
            <path d="M19 995v16l11-8z" class="mark" />
          </svg>
          <svg class="canvas">
            <rect x="94" y="122" width="1582" height="303" fill="#ffb380" />
            <rect v-for="j in joints" :key="j.x" :x="j.x" :y="j.y" :width="j.w" :height="428 - j.y" fill="#fff" />
            <text v-for="j in joints" :key="j.t" :x="j.tx" y="235">{{ j.t }}</text>
          </svg>
          <div class="vtrack"><div></div></div>
          <div class="htrack"><div></div></div>
          <button class="corner low" aria-label="Color management"><svg viewBox="0 0 16 16" v-html="icons.cms"></svg></button>
          <div class="grip tall"></div>
        </div>

        <aside class="panel">
          <div class="head"><svg viewBox="0 0 16 16" v-html="icons.layers"></svg><h2>Layers (Shift+Ctrl+L)</h2><button aria-label="Iconify">◂</button><button aria-label="Close">✖</button></div>
          <section class="frame layers">
            <div class="list">
              <div class="row"><svg viewBox="0 0 16 16" v-html="icons.eye"></svg><svg viewBox="0 0 16 16" v-html="icons.lock"></svg><span>Layer 1</span></div>
            </div>
            <div class="acts">
              <button v-for="n in ['plus', 'minus', 'top', 'up', 'down', 'bottom']" :key="n" :class="n" :aria-label="n"><svg viewBox="0 0 16 16" v-html="icons[n]"></svg></button>
            </div>
            <div class="blend">
              <label for="blend">Blend mode:</label>
              <div class="combo"><select id="blend"><option>Normal</option></select><svg viewBox="0 0 20 12"><path d="M2 1l8 8 8-8" /></svg></div>
            </div>
            <div class="spin opacity">
              <div class="level"><label for="opacity">Opacity (%)</label><input id="opacity" value="100.0"></div>
              <span class="steps"><button class="off" aria-label="Up"><svg viewBox="0 0 14 10"><path d="M2 8l5-6 5 6" /></svg></button><button aria-label="Down"><svg viewBox="0 0 14 10"><path d="M2 2l5 6 5-6" /></svg></button></span>
            </div>
          </section>
          <div class="grip"></div>
          <div class="head second"><svg viewBox="0 0 16 16" v-html="icons.clones"></svg><h2>Create Tiled Clones</h2><button aria-label="Iconify">◂</button><button aria-label="Close">✖</button></div>
          <section class="frame clones">
            <div class="tabs">
              <button class="cur">Symmetry</button>
              <button v-for="(t, i) in tabs" :key="t" :style="{ width: tabW[i] + 'px' }">{{ t }}</button>
            </div>
            <div class="book"><button class="pick"><span><b>P1</b>: simple translation</span><svg viewBox="0 0 20 12"><path d="M2 1l8 8 8-8" /></svg></button></div>
            <div class="opts">
              <input id="rc" v-model="layout" type="radio" value="rows"><label for="rc">Rows, columns:</label>
              <div class="spin"><input value="1" aria-label="Rows"><span class="steps"><button aria-label="Up"><svg viewBox="0 0 14 10"><path d="M2 8l5-6 5 6" /></svg></button><button class="off" aria-label="Down"><svg viewBox="0 0 14 10"><path d="M2 2l5 6 5-6" /></svg></button></span></div>
              <span class="x">×</span>
              <div class="spin"><input value="36" aria-label="Columns"><span class="steps"><button aria-label="Up"><svg viewBox="0 0 14 10"><path d="M2 8l5-6 5 6" /></svg></button><button aria-label="Down"><svg viewBox="0 0 14 10"><path d="M2 2l5 6 5-6" /></svg></button></span></div>
            </div>
            <div class="opts dis">
              <input id="wh" v-model="layout" type="radio" value="size"><label for="wh">Width, height:</label>
              <div class="spin"><input value="0.5556" disabled aria-label="Width"><span class="steps"><button class="off" aria-label="Up"><svg viewBox="0 0 14 10"><path d="M2 8l5-6 5 6" /></svg></button><button class="off" aria-label="Down"><svg viewBox="0 0 14 10"><path d="M2 2l5 6 5-6" /></svg></button></span></div>
              <span class="x">×</span>
              <div class="spin"><input value="0.5556" disabled aria-label="Height"><span class="steps"><button class="off" aria-label="Up"><svg viewBox="0 0 14 10"><path d="M2 8l5-6 5 6" /></svg></button><button class="off" aria-label="Down"><svg viewBox="0 0 14 10"><path d="M2 2l5 6 5-6" /></svg></button></span></div>
              <div class="combo unit"><select disabled aria-label="Unit"><option>in</option></select><svg viewBox="0 0 20 12"><path d="M2 1l8 8 8-8" /></svg></div>
            </div>
            <div class="saved"><input id="saved" type="checkbox"><label for="saved">Use saved size and position of the tile</label></div>
            <div class="foot"><button aria-label="Reset"></button><button class="a" aria-label="Remove"></button><button class="b" aria-label="Unclump"></button><button class="c" aria-label="Create"></button></div>
          </section>
        </aside>
        <div class="ptrack"><div></div></div>

        <div class="snaps">
          <template v-for="(s, i) in snaps" :key="i">
            <hr v-if="s === '|'">
            <button v-else :class="{ on: s[0] === '*' }" :aria-label="'Snap ' + i"><svg viewBox="0 0 16 16" v-html="icons[s.replace('*', '')]"></svg></button>
          </template>
        </div>
      </div>

      <div class="palette">
        <svg viewBox="0 0 26 26"><path d="M0 0h26v26H0z" fill="#fff" /><path d="M0 0l26 26M26 0L0 26" stroke="#800000" stroke-width="2" /></svg>
        <i v-for="(c, i) in swatches" :key="i" :style="{ background: '#' + c }"></i>
      </div>
      <div class="pscroll"><div></div></div>
      <footer class="status">
        <div class="fs"><span>Fill:</span><span>Stroke:</span></div>
        <span class="sbox s1"></span><span class="ssep"></span><span class="sbox s2"></span>
        <span class="ssep far"></span>
        <span class="coord">11.73</span>
        <div class="spin zoom"><input value="50%" aria-label="Zoom"><span class="steps"><button aria-label="Up"><svg viewBox="0 0 14 10"><path d="M2 8l5-6 5 6" /></svg></button><button aria-label="Down"><svg viewBox="0 0 14 10"><path d="M2 2l5 6 5-6" /></svg></button></span></div>
      </footer>
    </main>

    <nav class="dock">
      <a v-for="a in apps" :key="a.name" href="#" :aria-label="a.name" class="app">
        <svg viewBox="0 0 90 90" v-html="a.art"></svg>
        <span v-if="a.badge" class="badge">{{ a.badge }}</span>
        <i v-if="a.on"></i>
      </a>
      <span class="dsep"></span>
      <a href="#" class="app" aria-label="Trash"><svg viewBox="0 0 90 90"><path d="M14 14h64l-9 66c-2 8-44 8-46 0z" fill="#e9e9eb" opacity=".92" /><path d="M24 24l6 50M66 24l-5 50M45 30v45" stroke="#fff" stroke-width="6" opacity=".7" /><ellipse cx="46" cy="13" rx="32" ry="8" fill="#c9c9cc" /><path d="M16 12l12-10 6 8 6-12 8 9 8-8 6 8 14 4-10 8-14-4-10 5-14-4z" fill="#f6f6f6" stroke="#8a8078" stroke-width="2" /><path d="M34 8l8 2-5 6zM54 7l8 6-8 3z" fill="#4a6a9a" /><path d="M46 10l4 3-5 2z" fill="#39c6b0" /><path d="M64 9l5 5-5 1z" fill="#b5542a" /></svg></a>
    </nav>
  </div>
</template>

<style>
body { margin: 0; overflow: hidden; }
</style>

<style scoped>
.desktop { position: relative; min-height: 100vh; overflow: hidden; font: 23px/28px "DejaVu Sans", sans-serif; color: #2e3436;
  background: linear-gradient(#dcb7a0 0, #d9b391 90px, #eecfb0 260px, #f6ead0 600px, #e3b577 800px, #eec48b 860px, #f5e3bd 1000px, #e8c79a 1200px, #f3c096 1460px, #3a3a42 1560px, #1d212c 100%); }
.defs, .rocks { position: absolute; }
.rocks { left: 0; bottom: 0; width: 150px; height: 320px; }
.rightedge { position: absolute; right: 0; bottom: 0; width: 82px; height: 82px; background: linear-gradient(90deg, #fff 38px, #0c111c 38px); }
button { font: inherit; color: inherit; border: 0; background: none; padding: 0; }
input, select { font: inherit; color: inherit; box-sizing: border-box; }

.macbar { position: relative; height: 44px; display: flex; align-items: center; padding-left: 41px; font: 27px/44px Inter, sans-serif; color: #3d2f2a;
  background: linear-gradient(90deg, #f9ece0 0, #fdeae2 15%, #fee8e6 40%, #f6dde0 60%, #efdde8 85%, #e6ddee 100%); }
.apple { width: 27px; height: 32px; margin-right: 41px; }
.macitem { margin-right: 39px; }
.strong { font-weight: 700; }
.tray { margin-left: auto; display: flex; align-items: center; padding-right: 32px; color: #3b2a33; }
.slot { width: 59px; height: 44px; display: flex; align-items: center; justify-content: center; }
.slot.wide { width: 79px; gap: 10px; font-size: 26px; }
.slot.end { width: 64px; }
.battery { display: flex; align-items: center; gap: 8px; width: 145px; padding-left: 17px; font-size: 23px; }
.clock { width: 187px; white-space: nowrap; font-size: 27px; }

.window { position: absolute; border-radius: 10px 10px 0 0; background: #ececec; }
.back { left: 44px; right: -46px; top: 44px; height: 400px; color: #555; }
.front { left: 26px; right: -26px; top: 72px; bottom: 82px; display: flex; flex-direction: column; box-shadow: 0 6px 30px rgba(0, 0, 0, .55); }
.titlebar { position: relative; height: 44px; flex: none; box-sizing: border-box; display: flex; align-items: center; justify-content: center; gap: 15px; font: 25px/44px Inter, sans-serif;
  background: linear-gradient(#ececec, #d2d2d2); border-top: 2px solid #f6f6f6; border-radius: 10px 10px 0 0; }
.front .titlebar { color: #000; }
.lights { position: absolute; left: 16px; top: 8px; display: flex; gap: 16px; }
.lights i { width: 24px; height: 24px; border-radius: 50%; box-sizing: border-box; border: 1px solid rgba(0, 0, 0, .15); background: #dcdcdc; }
.lights .r { background: #fc5753; } .lights .y { background: #fdbc40; } .lights .g { background: #33c748; }
.xicon { width: 24px; height: 24px; border: 2px solid #aaa; background: #f4f4f4; font: 26px/24px "Liberation Sans", sans-serif; color: #333; text-align: center; }
.back .xicon { opacity: .5; }

.menus { display: flex; height: 42px; flex: none; align-items: center; gap: 28px; padding-left: 12px; }
.commands { display: flex; height: 72px; flex: none; align-items: center; padding-left: 8px; }
.ic { width: 56px; height: 54px; flex: none; display: flex; align-items: center; justify-content: center; border-radius: 8px; }
.ic svg { width: 32px; height: 32px; overflow: visible; }
.on { background: linear-gradient(#a3a8a5, #dcdcdc); box-shadow: inset 0 0 0 2px #b4b6b4; }
.ic.on { width: 50px; margin: 0 3px; }
.sep { width: 2px; height: 36px; margin: 0 11px; background: #b8b8b8; flex: none; }
.textbar { display: flex; height: 76px; box-sizing: border-box; flex: none; align-items: center; padding: 0 0 5px 9px; font-size: 21px; }
.textbar, .commands, .status { overflow: hidden; }
.field, .spin, .combo select { box-sizing: border-box; border: 2px solid #b6b8b6; border-top-color: #a5a8a5; border-radius: 7px; background: #fff; }
.field { display: flex; align-items: center; height: 47px; margin-right: 5px; flex: none; }
.field input, .spin input { border: 0; background: none; min-width: 0; flex: 1; padding: 0 0 0 6px; height: 100%; outline: 0; }
.field svg { width: 32px; height: 32px; margin-right: 4px; }
.family { width: 411px; } .size { width: 63px; } .style { width: 159px; }
.drop { width: 45px; height: 47px; margin-right: 5px; flex: none; border: 2px solid #b6b8b6; border-radius: 7px; box-sizing: border-box; background: linear-gradient(#fafafa, #d8d8d8); }
.drop svg, .combo svg, .pick svg { width: 20px; height: 12px; fill: none; stroke: #8b8d88; stroke-width: 4; }
.cap { width: 32px; height: 32px; margin: 0 14px; flex: none; overflow: visible; }
.spin { display: flex; height: 45px; width: 110px; flex: none; overflow: hidden; }
.spin input { padding-left: 8px; }
.steps { width: 27px; display: flex; flex-direction: column; border-left: 2px solid #eee; background: #fafafa; flex: none; }
.steps button { flex: 1; display: flex; align-items: center; justify-content: center; }
.steps button + button { border-top: 2px solid #ececec; }
.steps svg { width: 14px; height: 10px; fill: none; stroke: #888a85; stroke-width: 4; }
.steps .off svg { stroke: #bfc0be; }

.body { flex: 1; min-height: 0; display: flex; border-bottom: 2px solid #a0a0a0; }
.tools { width: 80px; flex: none; padding-top: 6px; box-sizing: border-box; overflow: hidden; }
.tools button { display: flex; width: 60px; height: 62px; margin: 0 0 2px 10px; align-items: center; justify-content: center; border-radius: 7px; }
.tools svg { width: 48px; height: 48px; }
.stage { position: relative; flex: 1; min-width: 0; display: grid; grid-template: 24px 1fr 40px / 30px 1fr 51px; }
.stage > * { min-width: 0; min-height: 0; }
.hruler { grid-area: 1 / 2; width: 100%; height: 24px; }
.vruler { grid-area: 2 / 1; width: 30px; height: 100%; }
.hruler path, .vruler path { stroke: #2e3436; stroke-width: 2; }
.hruler .mark, .vruler .mark { fill: #2e3436; stroke: none; }
.hruler text { font-size: 15px; fill: #444; } .vruler text { font-size: 13px; fill: #444; }
.canvas { grid-area: 2 / 2; width: 100%; height: 100%; background: #fff; }
.canvas text { font-size: 56px; fill: #000; }
.corner { grid-area: 1 / 3; width: 38px; height: 24px; display: flex; justify-content: center; align-items: flex-start; }
.corner svg { width: 28px; height: 28px; flex: none; overflow: visible; }
.corner.low { grid-area: 3 / 3; align-items: center; }
.corner.low svg { width: 24px; height: 24px; }
.vtrack { grid-area: 2 / 3; width: 26px; margin: 12px 0 0 6px; background: #d6d6d6; }
.vtrack div { width: 14px; height: 72px; margin: 408px auto 0; border-radius: 7px; background: #9b9c9d; }
.htrack { grid-area: 3 / 2; height: 26px; margin-top: 6px; background: #d6d6d6; display: flex; align-items: center; }
.htrack div { width: 147px; height: 14px; margin-left: 710px; border-radius: 7px; background: #9b9c9d; }
.grip { width: 50px; height: 6px; margin: 4px auto 0; background: repeating-linear-gradient(90deg, #c4c4c4 0 4px, transparent 4px 11px); }
.grip.tall { position: absolute; right: 5px; top: 624px; width: 6px; height: 48px; margin: 0; background: repeating-linear-gradient(#c4c4c4 0 4px, transparent 4px 11px); }

.panel { width: 895px; flex: none; box-sizing: border-box; border: 2px solid #a5a7a5; border-right-color: #fff; border-bottom-color: #fff; overflow: hidden; padding-left: 4px; display: flex; flex-direction: column; }
.head { display: flex; align-items: center; height: 49px; box-sizing: border-box; flex: none; padding: 0 17px 3px 0; }
.head svg { width: 32px; height: 32px; }
.head h2 { font: inherit; margin: 0 auto 0 0; }
.head button { width: 22px; height: 22px; border: 2px solid #8b8d88; border-radius: 4px; margin-left: 27px; box-sizing: border-box; font-size: 16px; line-height: 16px; color: #888a85; }
.frame { border: 2px solid #b9bab9; border-radius: 3px; margin-right: 4px; box-sizing: border-box; }
.layers { height: 311px; flex: none; padding: 5px 6px; }
.list { height: 114px; box-sizing: border-box; border: 2px solid #b6b8b6; background: #fff; }
.row { height: 51px; background: #3a81cd; color: #fff; display: flex; align-items: center; padding-left: 9px; }
.row svg { width: 28px; height: 28px; margin: 0 21px 0 0; }
.row span { margin-left: 28px; }
.acts { display: flex; height: 58px; align-items: center; padding-right: 1px; }
.acts button { width: 56px; height: 40px; display: flex; align-items: center; justify-content: center; }
.acts svg { width: 30px; height: 30px; }
.acts .top { margin-left: auto; }
.blend { display: flex; align-items: center; justify-content: space-between; margin: 3px 2px 0 0; }
.combo { position: relative; width: 692px; height: 51px; }
.combo select { width: 100%; height: 100%; appearance: none; background: linear-gradient(#fdfdfd, #dcdcdc); padding: 0 8px; opacity: 1; }
.combo svg { position: absolute; right: 12px; top: 20px; }
.spin.opacity { width: auto; height: 53px; margin: 10px 0 0 2px; }
.level { flex: 1; display: flex; align-items: center; margin: 5px 8px 3px 4px; padding-left: 6px; background: #4a90d9; color: #fff; border: solid #8bbaf0; border-width: 2px 0 0 0; box-shadow: inset -2px -3px #000; }
.level input { text-align: right; padding-right: 4px; }
.second { height: 50px; padding: 8px 19px 0 2px; }
.layers + .grip { flex: none; }
.clones { flex: 1; min-height: 0; margin: 3px 5px 0 2px; padding: 19px 19px 0 17px; border-bottom: 0; position: relative; overflow: hidden; }
.tabs { display: flex; align-items: flex-end; height: 51px; }
.tabs button { height: 42px; box-sizing: border-box; border: 2px solid #b0b2b0; border-left: 0; white-space: nowrap; background: linear-gradient(#e0e0e0, #c6c6c6); font-size: 22px; border-radius: 0 4px 0 0; flex: none; }
.tabs .cur { width: 149px; height: 53px; margin-bottom: -2px; border: 2px solid #b0b2b0; border-top: 6px solid #4a90d9; border-bottom: 0; border-radius: 6px 6px 0 0; background: #fdfdfd; }
.book { height: 583px; box-sizing: border-box; border: 2px solid #a5a9a6; border-top: 0; background: #fdfdfd; padding: 15px 18px 0 17px; }
.pick { width: 100%; height: 51px; box-sizing: border-box; border: 2px solid #b6b8b6; border-radius: 6px; background: linear-gradient(#fdfdfd, #dcdcdc); display: flex; align-items: center; justify-content: space-between; padding: 0 12px 0 8px; }
.opts { display: flex; align-items: center; height: 52px; margin-top: 25px; padding-left: 26px; }
.opts.dis { margin-top: 10px; }
input[type=radio], input[type=checkbox] { appearance: none; margin: 0; width: 28px; height: 28px; flex: none; border: 2px solid #a5a7a5; border-radius: 50%; background: linear-gradient(#fff, #e4e4e4); }
input[type=radio]:checked { background: radial-gradient(circle, #2e3436 4px, #f6f6f6 5px); }
input[type=checkbox] { width: 24px; height: 24px; border-radius: 4px; }
.opts label { width: 204px; margin-left: 14px; }
.opts .spin { width: 160px; height: 52px; }
.opts .spin input { padding-left: 10px; }
.x { width: 36px; text-align: center; }
.dis .spin, .dis select { background: #f3f3f1; }
.dis .spin, .dis .x, .dis select { color: #a9aba9; }
.dis .steps { background: #f3f3f1; }
.unit { width: 104px; margin-left: 10px; }
.unit svg { stroke: #b5b6b4; }
.saved { display: flex; align-items: center; gap: 16px; height: 30px; margin: 25px 0 0 7px; }
.foot { display: flex; margin-top: 16px; }
.foot button { width: 98px; height: 40px; flex: none; box-sizing: border-box; border: 2px solid #b0b2b0; border-radius: 6px; background: #f8f8f8; }
.foot .a { width: 128px; margin-left: auto; background: #f1f1ef; } .foot .b { width: 136px; margin: 0 12px 0 4px; background: #f1f1ef; } .foot .c { width: 126px; }
.ptrack { width: 26px; flex: none; background: #d6d6d6; padding-top: 4px; box-sizing: border-box; }
.ptrack div { width: 14px; height: 1142px; margin: 0 auto; border-radius: 7px; background: #9b9c9d; }
.snaps { width: 74px; flex: none; padding: 3px 0 0 12px; box-sizing: border-box; }
.snaps button { display: flex; align-items: center; width: 56px; height: 52px; margin: 2px 0; padding-left: 9px; border-radius: 7px; }
.snaps button + button { margin-top: 4px; }
.snaps svg { width: 32px; height: 32px; }
.snaps hr { border: 0; height: 2px; background: #b4b4b4; margin: 13px 0 13px 8px; }

.palette { height: 26px; display: flex; flex: none; overflow: hidden; padding: 0 0 0 2px; }
.palette svg, .palette i { width: 26px; height: 26px; flex: none; }
.pscroll { height: 26px; flex: none; margin-top: 4px; background: #cecece; box-shadow: 0 -3px #f4f4f4; display: flex; align-items: center; }
.pscroll div { width: 712px; height: 14px; margin-left: 6px; border-radius: 7px; background: #949596; }
.status { height: 52px; flex: none; display: flex; align-items: flex-start; padding-left: 5px; font-size: 19px; line-height: 25px; background: linear-gradient(#dcdcdc, #ededed); }
.fs { width: 278px; display: flex; flex-direction: column; padding-top: 5px; }
.sbox { height: 40px; border: 2px solid #a5a7a5; border-radius: 5px; margin-top: 4px; box-sizing: border-box; }
.s1 { width: 89px; } .s2 { width: 144px; margin-left: 79px; }
.ssep { width: 2px; height: 40px; margin: 4px 0 0 7px; background: #a5a7a5; }
.far { margin-left: auto; }
.coord { width: 102px; margin-left: 54px; padding-top: 1px; }
.zoom { margin: 4px 39px 0 0; }
.zoom input { padding: 0 14px 0 0; text-align: right; }

.dock { position: absolute; left: 82px; right: 82px; top: calc(100% - 126px); height: 140px; display: flex; align-items: flex-start; padding-left: 9px; box-sizing: border-box; border-radius: 10px 10px 0 0; border: 1px solid #c6c6c6; border-left: 0;
  background: linear-gradient(rgba(255, 255, 255, 0), rgba(255, 255, 255, .45)), linear-gradient(90deg, #bdbac1, #d0ced4 15%, #dcdadd 35%, #e0e0e0 70%, #e2dee0); box-shadow: 0 0 12px rgba(0, 0, 0, .3); }
.app { position: relative; width: 102px; height: 126px; flex: none; display: flex; flex-direction: column; align-items: center; padding-top: 13px; box-sizing: border-box; }
.app svg { width: 90px; height: 90px; overflow: visible; filter: drop-shadow(0 2px 1px rgba(0, 0, 0, .3)); }
.app i { width: 8px; height: 8px; margin-top: 11px; border-radius: 50%; background: #555; }
.badge { position: absolute; right: 0; top: 11px; min-width: 37px; height: 37px; padding: 0 5px; box-sizing: border-box; border-radius: 19px; background: #fb4744; color: #fff; font: 21px/37px Inter, sans-serif; text-align: center; }
.dsep { width: 2px; height: 94px; margin: 15px 21px 0 22px; background: #b5b3b6; }
</style>
